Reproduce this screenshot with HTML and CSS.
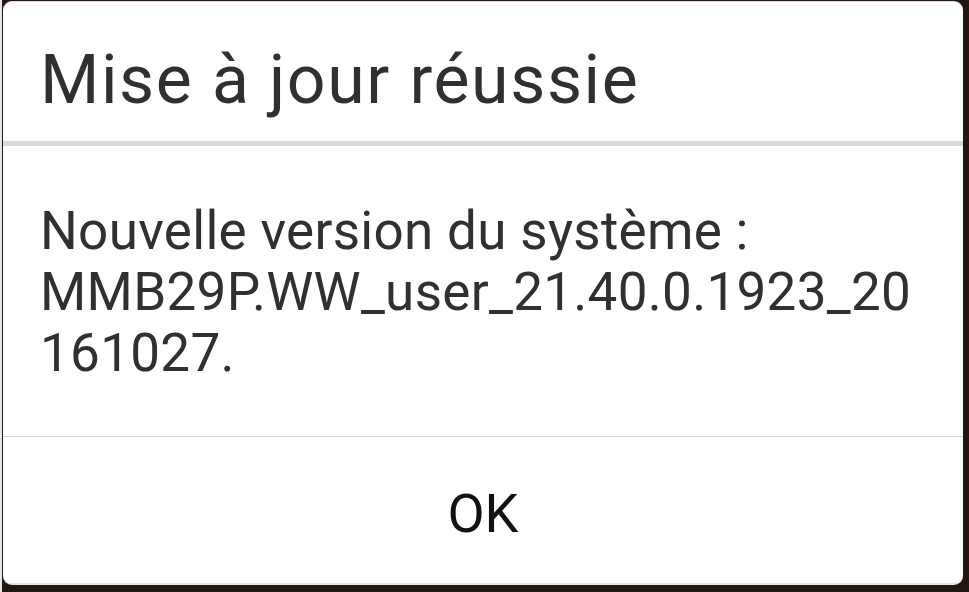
FILE: index.html
```html
<!DOCTYPE html>
<html lang="fr">
  <head>
    <meta charset="UTF-8" />
    <meta name="viewport" content="width=device-width, initial-scale=1" />
    <title>Mise à jour réussie</title>
    <link rel="stylesheet" href="styles.css">
  </head>
  <body>
    <div class="dialog" role="dialog" aria-labelledby="dlgTitle">
      <h1 class="dialog-title" id="dlgTitle">Mise à jour réussie</h1>
      <div class="dialog-body">
        <p>Nouvelle version du système :<br>MMB29P.WW_user_21.40.0.1923_20<br>161027.</p>
      </div>
      <div class="dialog-actions">
        <button type="button" class="btn-ok">OK</button>
      </div>
    </div>
  </body>
</html>
```

FILE: styles.css
```css
:root {
  --clr-text: #303030;
  --clr-divider: #d9d9d9;
  --clr-backdrop: #22160f;
  --font-family: Roboto, "Noto Sans", sans-serif;
}

* {
  box-sizing: border-box;
}

html,
body {
  height: 100%;
}

body {
  margin: 0;
  background: var(--clr-backdrop);
  font-family: var(--font-family);
  border-left: 2px solid #e6e6e6;
  padding: 1px 6px 6px 1px;
}

.dialog {
  background: #fff;
  border-top: 1px solid #dcdcdc;
  border-bottom: 2px solid #e6e6e6;
  border-radius: 9px;
  height: 584px;
  display: flex;
  flex-direction: column;
  overflow: hidden;
}

.dialog-title {
  margin: 0;
  padding: 38px 37px 21px;
  font-size: 68px;
  line-height: 80px;
  letter-spacing: 1.6px;
  font-weight: 400;
  color: var(--clr-text);
  border-bottom: 5px solid var(--clr-divider);
}

.dialog-body {
  padding: 55px 37px 52px;
  border-bottom: 1px solid #d2d2d2;
}

.dialog-body p {
  margin: 0;
  font-size: 53px;
  line-height: 61px;
  letter-spacing: 0.3px;
  color: var(--clr-text);
}

.dialog-actions {
  flex: 1;
  display: flex;
  justify-content: center;
  align-items: center;
  padding-top: 6px;
}

.btn-ok {
  border: none;
  background: none;
  font-family: var(--font-family);
  font-size: 54px;
  color: #111;
  padding: 0 20px;
  cursor: pointer;
}
```
